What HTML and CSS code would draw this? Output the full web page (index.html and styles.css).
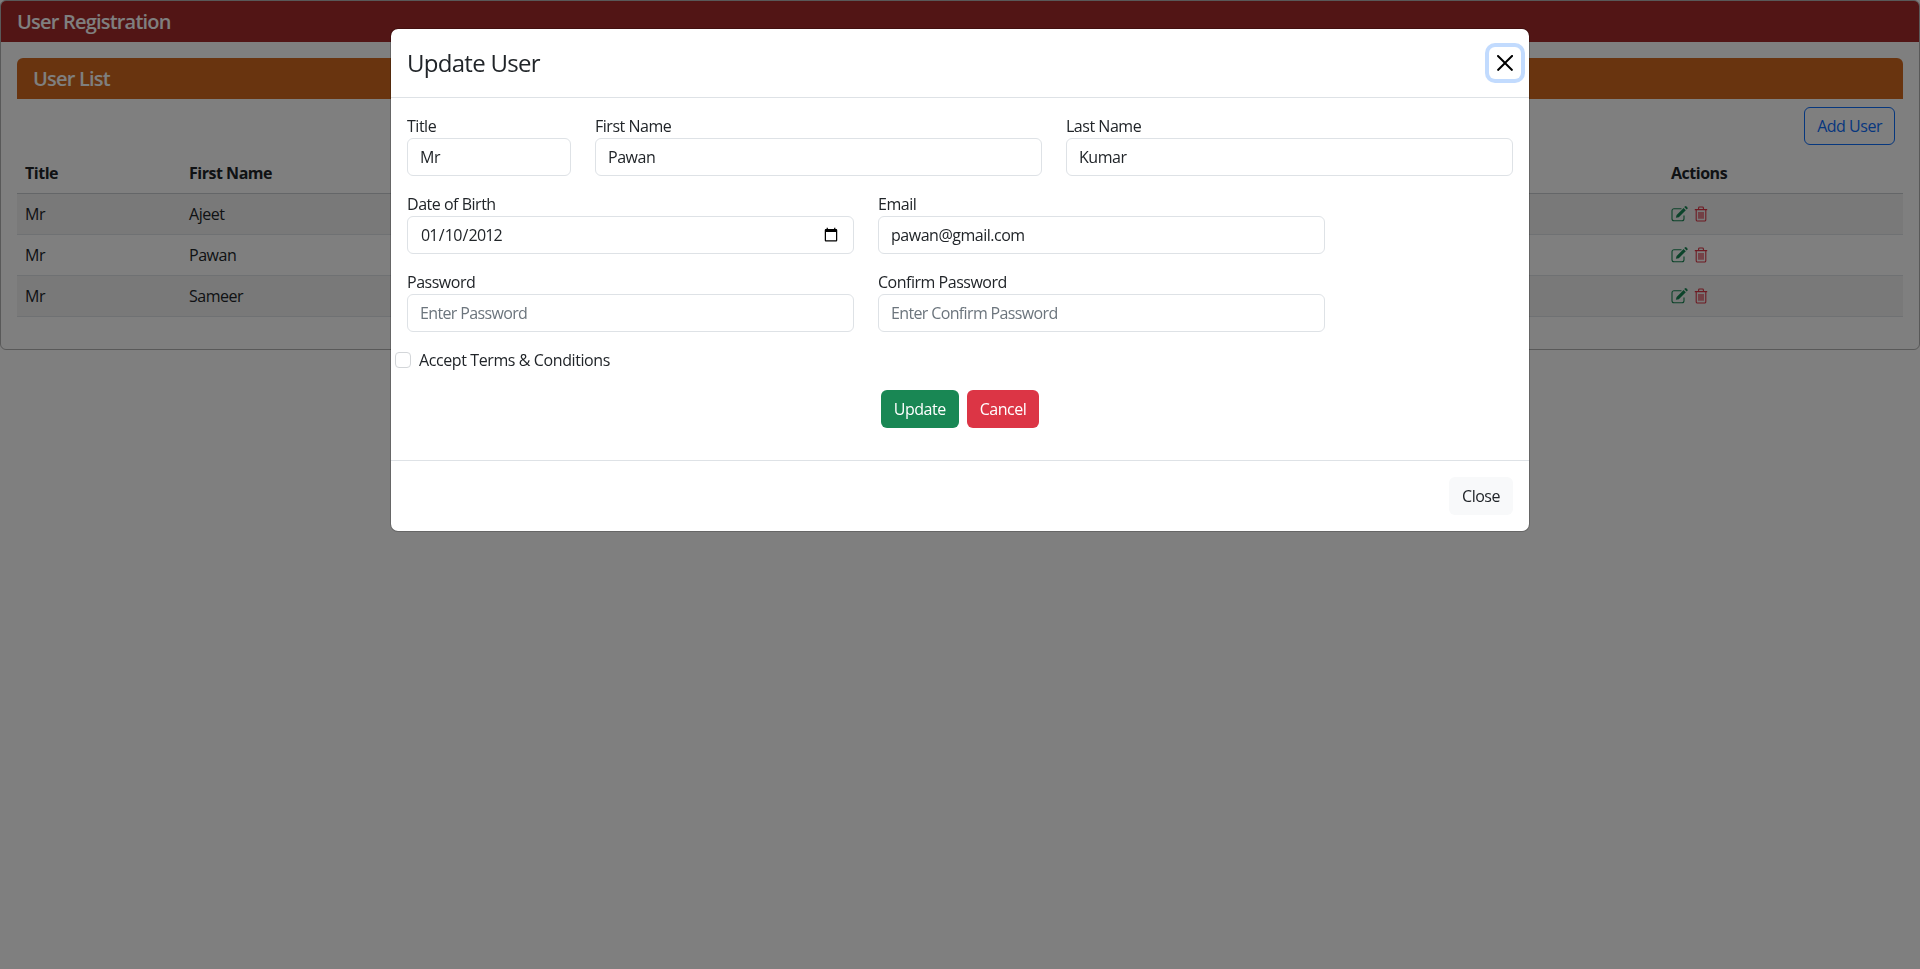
FILE: index.html
```html
<!DOCTYPE html>
<html lang="en">

<head>
  <meta charset="utf-8">
  <title>User Registration</title>
  <link rel="stylesheet" href="styles.css">
</head>

<body>
  <div class="card">
    <div class="card-header">User Registration</div>
    <div class="card-body">
      <div class="list-header">User List</div>
      <div class="toolbar">
        <button class="btn btn-outline">Add User</button>
      </div>
      <table class="user-table">
        <thead>
          <tr>
            <th class="col-title">Title</th>
            <th class="col-first">First Name</th>
            <th></th>
            <th class="col-actions">Actions</th>
          </tr>
        </thead>
        <tbody>
          <tr>
            <td>Mr</td>
            <td>Ajeet</td>
            <td></td>
            <td>
              <svg class="icon icon-edit" viewBox="0 0 17 16"><use href="#edit"></use></svg>
              <svg class="icon icon-trash" viewBox="0 0 14 16"><use href="#trash"></use></svg>
            </td>
          </tr>
          <tr>
            <td>Mr</td>
            <td>Pawan</td>
            <td></td>
            <td>
              <svg class="icon icon-edit" viewBox="0 0 17 16"><use href="#edit"></use></svg>
              <svg class="icon icon-trash" viewBox="0 0 14 16"><use href="#trash"></use></svg>
            </td>
          </tr>
          <tr>
            <td>Mr</td>
            <td>Sameer</td>
            <td></td>
            <td>
              <svg class="icon icon-edit" viewBox="0 0 17 16"><use href="#edit"></use></svg>
              <svg class="icon icon-trash" viewBox="0 0 14 16"><use href="#trash"></use></svg>
            </td>
          </tr>
        </tbody>
      </table>
    </div>
  </div>

  <div class="backdrop"></div>

  <div class="modal">
    <div class="modal-content">
      <div class="modal-header">
        <h5 class="modal-title">Update User</h5>
        <button class="btn-close" aria-label="Close">
          <svg viewBox="0 0 16 16" width="16" height="16">
            <path d="M.3.3a1 1 0 0 1 1.4 0L8 6.6 14.3.3a1 1 0 1 1 1.4 1.4L9.4 8l6.3 6.3a1 1 0 0 1-1.4 1.4L8 9.4l-6.3 6.3a1 1 0 0 1-1.4-1.4L6.6 8 .3 1.7A1 1 0 0 1 .3.3z"></path>
          </svg>
        </button>
      </div>
      <div class="modal-body">
        <div class="form-row">
          <div class="field span-2">
            <label for="title">Title</label>
            <input type="text" id="title" value="Mr">
          </div>
          <div class="field span-5">
            <label for="first">First Name</label>
            <input type="text" id="first" value="Pawan">
          </div>
          <div class="field span-5">
            <label for="last">Last Name</label>
            <input type="text" id="last" value="Kumar">
          </div>
        </div>
        <div class="form-row">
          <div class="field span-5">
            <label for="dob">Date of Birth</label>
            <input type="date" id="dob" value="2012-01-10">
          </div>
          <div class="field span-5">
            <label for="email">Email</label>
            <input type="text" id="email" value="pawan@gmail.com">
          </div>
        </div>
        <div class="form-row">
          <div class="field span-5">
            <label for="password">Password</label>
            <input type="password" id="password" placeholder="Enter Password">
          </div>
          <div class="field span-5">
            <label for="confirm">Confirm Password</label>
            <input type="password" id="confirm" placeholder="Enter Confirm Password">
          </div>
        </div>
        <div class="form-check">
          <input type="checkbox" id="terms">
          <label for="terms">Accept Terms &amp; Conditions</label>
        </div>
        <div class="form-actions">
          <button class="btn btn-success">Update</button>
          <button class="btn btn-danger">Cancel</button>
        </div>
      </div>
      <div class="modal-footer">
        <button class="btn btn-light">Close</button>
      </div>
    </div>
  </div>

  <svg class="sprites" width="0" height="0">
    <symbol id="edit" viewBox="0 0 17 16">
      <path d="M13 9.5v3.2a2 2 0 0 1-2 2H3a2 2 0 0 1-2-2V4.7a2 2 0 0 1 2-2h7.5" fill="none" stroke="currentColor" stroke-width="1.1"></path>
      <path d="M5.6 9 12.6 2l2.2 2.2-7 7-2.9.6z"></path>
      <path d="M13.4 1.2l.9-.9a.6.6 0 0 1 .8 0l1.5 1.5a.6.6 0 0 1 0 .8l-.9.9z"></path>
    </symbol>
    <symbol id="trash" viewBox="0 0 14 16">
      <path d="M.8 3.6h12.4M4.6 3.4V1.9a.9.9 0 0 1 .9-.9h3a.9.9 0 0 1 .9.9v1.5M2.2 3.8v10a1.2 1.2 0 0 0 1.2 1.2h7.2a1.2 1.2 0 0 0 1.2-1.2v-10" fill="none" stroke="currentColor" stroke-width="1.1"></path>
      <path d="M4.4 6h1.2v6.8H4.4zM6.4 6h1.2v6.8H6.4zM8.4 6h1.2v6.8H8.4z"></path>
    </symbol>
  </svg>
</body>

</html>
```

FILE: styles.css
```css
* {
  box-sizing: border-box;
}

body {
  margin: 0;
  background-color: #fff;
  font-family: "Open Sans", "Noto Sans", sans-serif;
  font-size: 16px;
  line-height: 24px;
  letter-spacing: -0.03em;
  color: #212529;
}

.card {
  border: 1px solid rgba(0, 0, 0, .3);
  border-radius: 6px;
  overflow: hidden;
}

.card-header {
  height: 41px;
  padding: 0 16px;
  background-color: #a52a2a;
  color: #fff;
  font-size: 20px;
  font-weight: 600;
  letter-spacing: -0.04em;
  line-height: 41px;
}

.card-body {
  height: 307px;
  padding: 16px;
}

.list-header {
  height: 41px;
  padding: 0 16px;
  border-radius: 6px 6px 0 0;
  background-color: #d2691e;
  color: #fff;
  font-size: 20px;
  font-weight: 600;
  letter-spacing: -0.04em;
  line-height: 41px;
}

.toolbar {
  display: flex;
  justify-content: flex-end;
  padding: 8px 8px 7px 0;
}

.btn {
  height: 38px;
  padding: 0 12px;
  border: 1px solid transparent;
  border-radius: 6px;
  font: inherit;
  letter-spacing: inherit;
}

.btn-outline {
  border-color: #0d6efd;
  background: transparent;
  color: #0d6efd;
}

.btn-success {
  background-color: #198754;
  color: #fff;
}

.btn-danger {
  background-color: #dc3545;
  color: #fff;
}

.btn-light {
  background-color: #f8f9fa;
  color: #212529;
}

.user-table {
  width: 100%;
  border-collapse: collapse;
}

.user-table th,
.user-table td {
  height: 41px;
  padding: 8px;
  border-bottom: 1px solid #dee2e6;
  text-align: left;
}

.user-table th {
  padding: 9px 8px 7px;
  font-weight: 700;
}

.user-table thead th {
  border-bottom-color: #c9cdd1;
}

.user-table tbody tr {
  background-color: rgba(0, 0, 0, .05);
}

.user-table tbody tr:nth-child(even) {
  background-color: transparent;
}

.col-title {
  width: 164px;
}

.col-first {
  width: 200px;
}

.col-actions {
  width: 240px;
}

.icon {
  height: 16px;
  vertical-align: -2px;
  fill: currentColor;
}

.icon-edit {
  width: 17px;
  color: #198754;
}

.icon-trash {
  width: 14px;
  margin-left: 2px;
  color: #dc3545;
}

.sprites {
  position: absolute;
}

.backdrop {
  position: fixed;
  inset: 0;
  background-color: rgba(0, 0, 0, .5);
}

.modal {
  position: fixed;
  inset: 0;
  display: flex;
  justify-content: center;
  align-items: flex-start;
  padding-top: 28px;
}

.modal-content {
  width: 1140px;
  border: 1px solid rgba(0, 0, 0, .2);
  border-radius: 8px;
  background-clip: padding-box;
  background-color: #fff;
}

.modal-header {
  display: flex;
  align-items: center;
  justify-content: space-between;
  height: 69px;
  padding: 0 8px 0 16px;
  border-bottom: 1px solid #dee2e6;
}

.modal-title {
  margin: 0;
  font-size: 24px;
  font-weight: 500;
  letter-spacing: -0.03em;
  line-height: 36px;
}

.btn-close {
  display: flex;
  align-items: center;
  justify-content: center;
  width: 32px;
  height: 32px;
  padding: 0;
  border: 0;
  border-radius: 6px;
  background: transparent;
  box-shadow: 0 0 0 4px rgba(13, 110, 253, .25);
}

.modal-body {
  height: 362px;
  padding: 16px;
}

.form-row {
  display: flex;
  gap: 24px;
  margin-bottom: 16px;
}

.field {
  display: flex;
  flex-direction: column;
}

.span-2 {
  width: 164px;
}

.span-5 {
  width: 447px;
}

.field input {
  height: 38px;
  padding: 0 12px;
  border: 1px solid #dee2e6;
  border-radius: 6px;
  background-color: #fff;
  color: #212529;
  font: inherit;
  letter-spacing: inherit;
}

.field input[type="date"] {
  letter-spacing: -0.05em;
}

.field input::placeholder {
  color: #6c757d;
  letter-spacing: -0.04em;
}

.form-check {
  display: flex;
  align-items: center;
  gap: 8px;
  height: 24px;
  margin-left: -12px;
  letter-spacing: -0.025em;
}

.form-check input {
  width: 16px;
  height: 16px;
  margin: 0;
  border: 1px solid #d3d6d9;
  border-radius: 4px;
  background-color: #fff;
  appearance: none;
}

.form-actions {
  display: flex;
  justify-content: center;
  gap: 8px;
  margin-top: 18px;
}

.modal-footer {
  display: flex;
  justify-content: flex-end;
  padding: 16px;
  border-top: 1px solid #dee2e6;
}
```
